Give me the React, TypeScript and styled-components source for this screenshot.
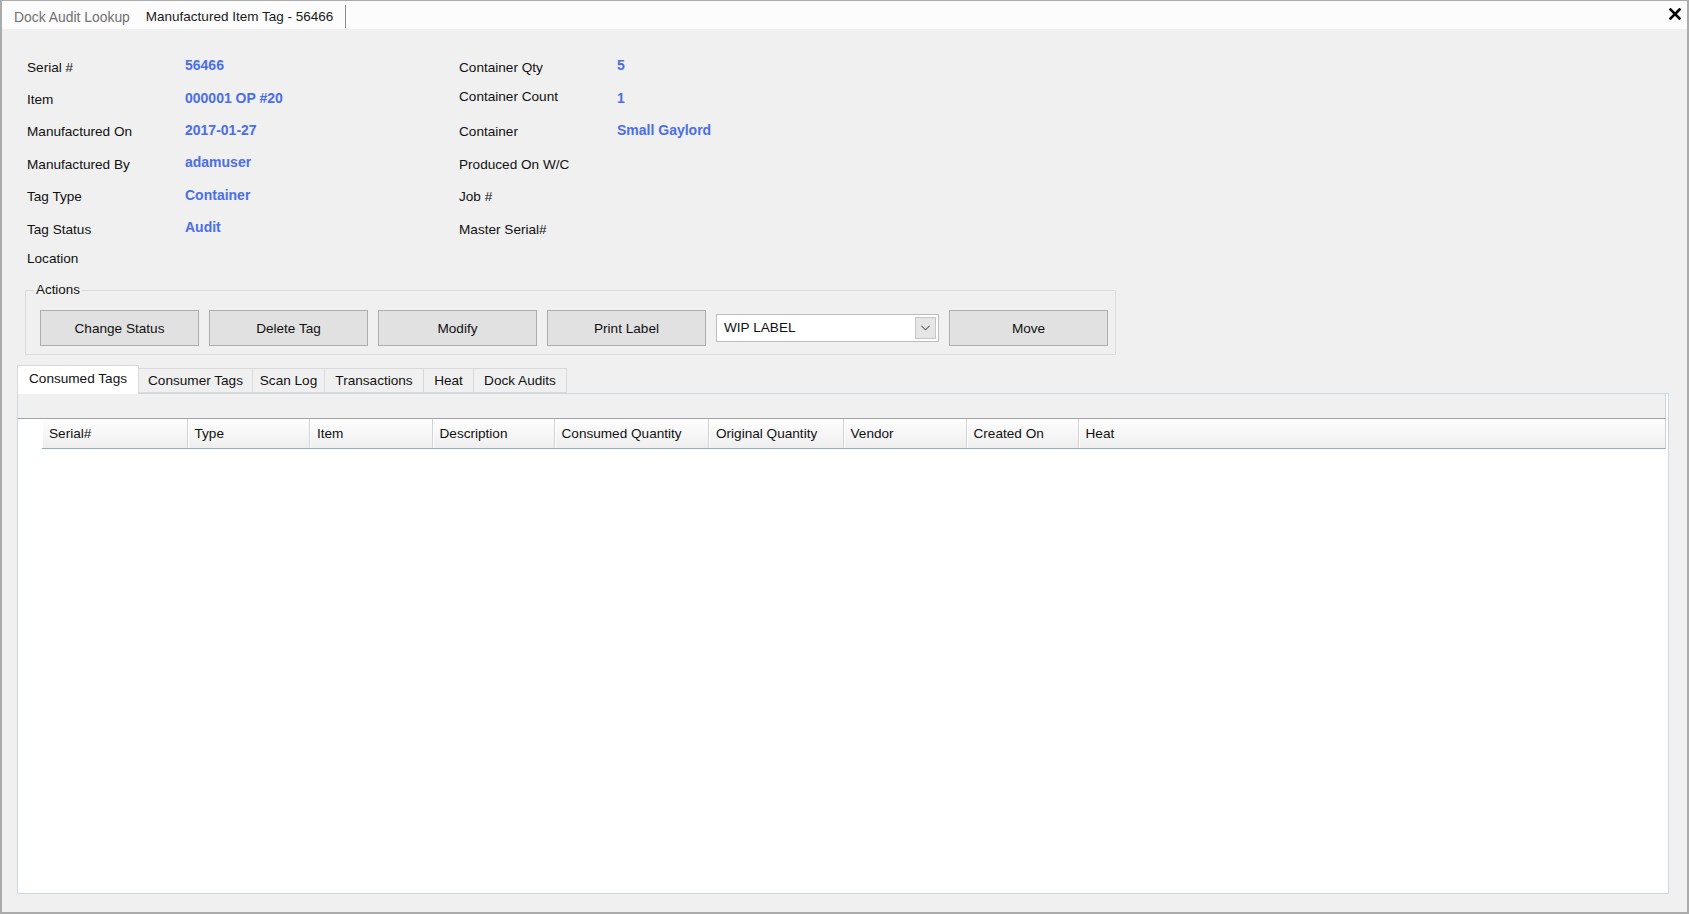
import React from 'react';
import styled, { createGlobalStyle } from 'styled-components';

const GlobalStyle = createGlobalStyle`
  html, body {
    margin: 0;
    padding: 0;
    background: #f0f0f0;
  }
  * {
    box-sizing: border-box;
  }
`;

const Window = styled.div`
  width: 1689px;
  height: 914px;
  display: flex;
  flex-direction: column;
  background: #f0f0f0;
  border: 2px solid #ababab;
  border-top-width: 1px;
  font-family: "Liberation Sans", Arial, sans-serif;
  font-size: 13.6px;
  color: #111;
  overflow: hidden;
`;

const TopBar = styled.div`
  height: 28px;
  flex: none;
  display: flex;
  align-items: stretch;
  background: #fcfcfc;
`;

const DocTab = styled.div<{ $active?: boolean }>`
  display: flex;
  align-items: center;
  padding: 0 ${({ $active }) => ($active ? '12px' : '9px')} 0 ${({ $active }) => ($active ? '7px' : '12px')};
  color: ${({ $active }) => ($active ? '#1a1a1a' : '#707070')};
  font-size: ${({ $active }) => ($active ? '13.5px' : '13.9px')};
  border-right: ${({ $active }) => ($active ? '1.5px solid #8a8a8a' : 'none')};
  margin: 4px 0 1px;
`;

const Spacer = styled.div`
  flex: 1;
`;

const CloseButton = styled.div`
  display: flex;
  align-items: center;
  padding: 0 6px 2px 0;
`;

const Content = styled.div`
  flex: 1;
  display: flex;
  flex-direction: column;
  padding: 22px 18px 18px 15px;
  min-height: 0;
`;

const FieldsArea = styled.div`
  display: flex;
  padding-left: 10px;
`;

const FieldColumn = styled.div<{ $width: number }>`
  width: ${({ $width }) => $width}px;
  display: flex;
  flex-direction: column;
`;

const FieldRow = styled.div<{ $h?: number }>`
  height: ${({ $h }) => $h ?? 32.4}px;
  display: flex;
  align-items: center;
`;

const FieldLabel = styled.div<{ $shift?: number }>`
  width: 158px;
  flex: none;
  transform: translateY(${({ $shift }) => $shift ?? 0}px);
`;

const FieldValue = styled.div`
  font-weight: bold;
  font-size: 14px;
  color: #4a6ee8;
  transform: translateY(-2.4px);
`;

const ActionsGroup = styled.fieldset`
  width: 1091px;
  margin: 11px 0 0 8px;
  padding: 0;
  border: 1px solid #dadada;
  border-radius: 1px;
`;

const GroupLegend = styled.legend`
  margin-left: 8px;
  padding: 0 2px;
  line-height: 16px;
  font-size: 13.4px;
`;

const ButtonRow = styled.div`
  display: flex;
  align-items: center;
  gap: 10px;
  padding: 12px 0 8px 14px;
`;

const ActionButton = styled.div`
  width: 159px;
  height: 36px;
  display: flex;
  align-items: center;
  justify-content: center;
  background: #e1e1e1;
  border: 1px solid #adadad;
  color: #111;
`;

const Select = styled.div`
  width: 223px;
  height: 28px;
  display: flex;
  align-items: center;
  background: #fff;
  border: 1px solid #bcbcbc;
  padding: 2px 2px 2px 7px;
`;

const SelectText = styled.div`
  flex: 1;
  padding-bottom: 2px;
`;

const SelectArrow = styled.div`
  width: 21px;
  height: 22px;
  display: flex;
  align-items: center;
  justify-content: center;
  background: #e6e6e6;
  border: 1px solid #c6c6c6;
`;

const TabStrip = styled.div`
  margin-top: 10px;
  height: 28px;
  flex: none;
  display: flex;
  align-items: flex-end;
  position: relative;
  z-index: 1;
`;

const PageTab = styled.div<{ $active?: boolean; $width: number }>`
  width: ${({ $width }) => $width}px;
  height: ${({ $active }) => ($active ? 29 : 25)}px;
  margin-bottom: ${({ $active }) => ($active ? -1 : 0)}px;
  display: flex;
  align-items: center;
  justify-content: center;
  padding-bottom: ${({ $active }) => ($active ? 3 : 0)}px;
  background: ${({ $active }) => ($active ? '#ffffff' : '#f0f0f0')};
  border: 1px solid #d9d9d9;
  border-bottom: ${({ $active }) => ($active ? 'none' : '1px solid #d9d9d9')};
  border-left-width: ${({ $active }) => ($active ? 1 : 0)}px;
  color: #111;
  font-size: 13.6px;
`;

const TabPanel = styled.div`
  flex: 1;
  display: flex;
  flex-direction: column;
  background: #fff;
  border: 1px solid #cdd7e2;
  min-height: 0;
`;

const GridStrip = styled.div`
  height: 25px;
  flex: none;
  background: #f0f0f0;
  border-bottom: 1px solid #a3a3a3;
  margin-right: 2px;
  border-right: 1px solid #c9d3dc;
`;

const GridBody = styled.div`
  flex: 1;
  padding: 0 2px 0 24px;
`;

const HeaderRow = styled.div`
  height: 30px;
  display: flex;
  background: linear-gradient(to bottom, #fdfdfd 0%, #f6f6f6 55%, #eeeeee 100%);
  border-bottom: 1px solid #8fb0b8;
  border-right: 1px solid #c9d3dc;
`;

const HeaderCell = styled.div<{ $width?: number }>`
  width: ${({ $width }) => ($width ? `${$width}px` : 'auto')};
  flex: ${({ $width }) => ($width ? 'none' : '1')};
  display: flex;
  align-items: center;
  padding: 0 6px 1px 7px;
  border-right: ${({ $width }) => ($width ? '1px solid #d3d3d3' : 'none')};
  box-shadow: inset 1px 0 0 #ffffff;
  white-space: nowrap;
`;

const fieldsLeft = [
  { label: 'Serial #', value: '56466' },
  { label: 'Item', value: '000001 OP #20' },
  { label: 'Manufactured On', value: '2017-01-27' },
  { label: 'Manufactured By', value: 'adamuser' },
  { label: 'Tag Type', value: 'Container' },
  { label: 'Tag Status', value: 'Audit' },
  { label: 'Location', value: '', h: 26 },
];

const fieldsRight = [
  { label: 'Container Qty', value: '5' },
  { label: 'Container Count', value: '1', shift: -3 },
  { label: 'Container', value: 'Small Gaylord' },
  { label: 'Produced On W/C', value: '' },
  { label: 'Job #', value: '' },
  { label: 'Master Serial#', value: '' },
];

const tabs = [
  { label: 'Consumed Tags', width: 122, active: true },
  { label: 'Consumer Tags', width: 114 },
  { label: 'Scan Log', width: 72 },
  { label: 'Transactions', width: 99 },
  { label: 'Heat', width: 50 },
  { label: 'Dock Audits', width: 93 },
];

const columns = [
  { label: 'Serial#', width: 145.5 },
  { label: 'Type', width: 122.5 },
  { label: 'Item', width: 122.5 },
  { label: 'Description', width: 122 },
  { label: 'Consumed Quantity', width: 154.5 },
  { label: 'Original Quantity', width: 134.5 },
  { label: 'Vendor', width: 123 },
  { label: 'Created On', width: 112 },
  { label: 'Heat' },
];

function CloseIcon(): JSX.Element {
  return (
    <svg width="12" height="12" viewBox="0 0 12 12">
      <path d="M1.5 1.5 L10.5 10.5 M10.5 1.5 L1.5 10.5" stroke="#000" strokeWidth="2.6" strokeLinecap="square" />
    </svg>
  );
}

function ChevronDown(): JSX.Element {
  return (
    <svg width="9" height="6" viewBox="0 0 9 6">
      <path d="M0.5 0.8 L4.5 4.8 L8.5 0.8" stroke="#606060" strokeWidth="1.1" fill="none" />
    </svg>
  );
}

export default function App(): JSX.Element {
  return (
    <>
      <GlobalStyle />
      <Window>
        <TopBar>
          <DocTab>Dock Audit Lookup</DocTab>
          <DocTab $active>Manufactured Item Tag - 56466</DocTab>
          <Spacer />
          <CloseButton>
            <CloseIcon />
          </CloseButton>
        </TopBar>
        <Content>
          <FieldsArea>
            <FieldColumn $width={432}>
              {fieldsLeft.map((f) => (
                <FieldRow key={f.label} $h={f.h}>
                  <FieldLabel>{f.label}</FieldLabel>
                  {f.value && <FieldValue>{f.value}</FieldValue>}
                </FieldRow>
              ))}
            </FieldColumn>
            <FieldColumn $width={400}>
              {fieldsRight.map((f) => (
                <FieldRow key={f.label}>
                  <FieldLabel $shift={f.shift}>{f.label}</FieldLabel>
                  {f.value && <FieldValue>{f.value}</FieldValue>}
                </FieldRow>
              ))}
            </FieldColumn>
          </FieldsArea>

          <ActionsGroup>
            <GroupLegend>Actions</GroupLegend>
            <ButtonRow>
              <ActionButton>Change Status</ActionButton>
              <ActionButton>Delete Tag</ActionButton>
              <ActionButton>Modify</ActionButton>
              <ActionButton>Print Label</ActionButton>
              <Select>
                <SelectText>WIP LABEL</SelectText>
                <SelectArrow>
                  <ChevronDown />
                </SelectArrow>
              </Select>
              <ActionButton>Move</ActionButton>
            </ButtonRow>
          </ActionsGroup>

          <TabStrip>
            {tabs.map((t) => (
              <PageTab key={t.label} $active={t.active} $width={t.width}>
                {t.label}
              </PageTab>
            ))}
          </TabStrip>
          <TabPanel>
            <GridStrip />
            <GridBody>
              <HeaderRow>
                {columns.map((c) => (
                  <HeaderCell key={c.label} $width={c.width}>
                    {c.label}
                  </HeaderCell>
                ))}
              </HeaderRow>
            </GridBody>
          </TabPanel>
        </Content>
      </Window>
    </>
  );
}
